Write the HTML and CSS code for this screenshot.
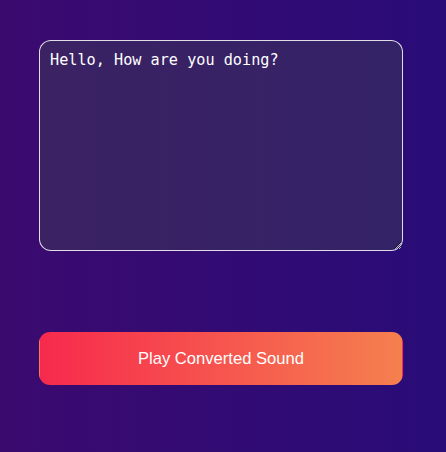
FILE: index.html
```html
<!DOCTYPE html>
<html lang="en">
<head>
<meta charset="utf-8">
<title>Text to Speech</title>
<link rel="stylesheet" href="styles.css">
</head>
<body>
<main class="app">
  <textarea class="input" spellcheck="false">Hello, How are you doing?</textarea>
  <button class="play" type="button">Play Converted Sound</button>
</main>
</body>
</html>
```
FILE: styles.css
```css
html, body {
  margin: 0;
  height: 100%;
}
body {
  background: linear-gradient(to right, #3b0a6f, #290c78);
  font-family: "Liberation Sans", Arial, sans-serif;
}
.app {
  display: flex;
  flex-direction: column;
  gap: 81px;
  padding: 40px 43px 0 39px;
}
.input {
  box-sizing: border-box;
  width: 364px;
  height: 211px;
  padding: 10px;
  border: 1px solid rgba(255, 255, 255, 0.85);
  border-radius: 12px;
  background: rgba(60, 55, 90, 0.55);
  color: #ffffff;
  font-family: "DejaVu Sans Mono", monospace;
  font-size: 15.2px;
  outline: none;
}
.play {
  box-sizing: border-box;
  width: 364px;
  height: 53px;
  border: 1px solid transparent;
  border-radius: 11px;
  background: linear-gradient(to right, #f72a4d, #f5804f);
  color: #ffffff;
  font-family: "Liberation Sans", Arial, sans-serif;
  font-size: 16.6px;
  cursor: pointer;
}
```
